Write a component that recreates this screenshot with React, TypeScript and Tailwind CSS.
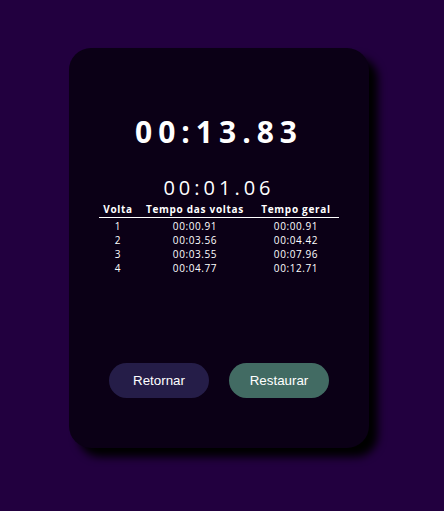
const laps = [
  { n: 1, lap: "00:00.91", total: "00:00.91" },
  { n: 2, lap: "00:03.56", total: "00:04.42" },
  { n: 3, lap: "00:03.55", total: "00:07.96" },
  { n: 4, lap: "00:04.77", total: "00:12.71" },
]

export default function App() {
  return (
    <div className="min-h-[511px] w-full bg-[#22003f] pt-[48px] pl-[69px]">
      <div className="flex h-[400px] w-[300px] flex-col items-center rounded-[22px] bg-[#0b0016] pt-[69px] shadow-[9px_9px_9px_#000] font-['Open_Sans',sans-serif] text-white">
        <div className="text-[30px] font-bold leading-[30px] tracking-[6px]">00:13.83</div>
        <div className="mt-[31px] text-[20px] leading-[20px] tracking-[4px]">00:01.06</div>
        <div className="mt-[4px] w-[240px] text-[10px]">
          <div className="grid grid-cols-[38px_116px_86px] border-b border-white pb-[1px] font-bold leading-[14px] tracking-[0.7px] text-center">
            <span>Volta</span>
            <span>Tempo das voltas</span>
            <span>Tempo geral</span>
          </div>
          <div className="pt-[1px]">
            {laps.map((l) => (
              <div key={l.n} className="grid grid-cols-[38px_116px_86px] leading-[14px] tracking-[0.6px] text-center">
                <span>{l.n}</span>
                <span>{l.lap}</span>
                <span>{l.total}</span>
              </div>
            ))}
          </div>
        </div>
        <div className="mt-auto mb-[50px] flex gap-[20px] font-['Liberation_Sans',Arial,sans-serif] text-[13.33px]">
          <button className="h-[35px] w-[100px] rounded-full bg-[#251d48] text-white">Retornar</button>
          <button className="h-[35px] w-[100px] rounded-full bg-[#426b63] text-white">Restaurar</button>
        </div>
      </div>
    </div>
  )
}
